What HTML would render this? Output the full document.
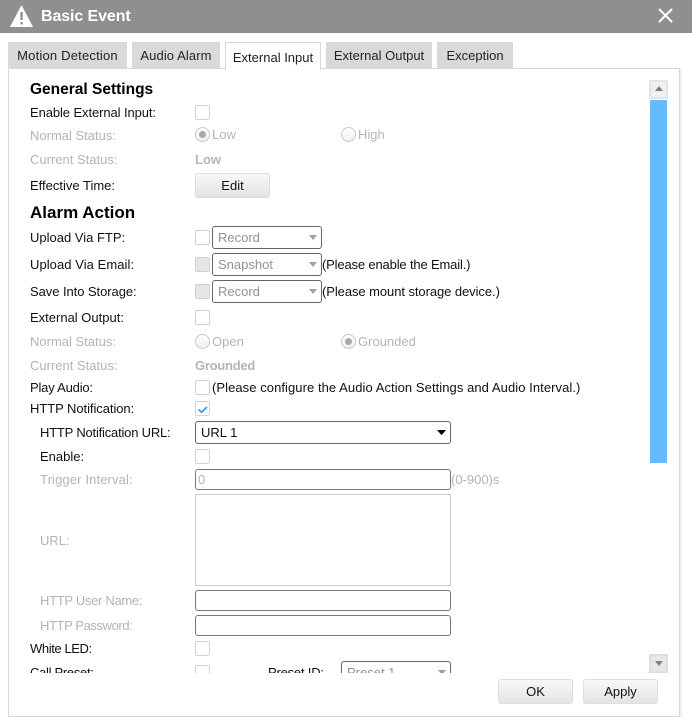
<!DOCTYPE html>
<html><head><meta charset="utf-8">
<style>
html,body{margin:0;padding:0;background:#fff}
#r{position:relative;width:692px;height:723px;overflow:hidden;background:#fff;font-family:"Liberation Sans","Noto Sans CJK SC",sans-serif;font-size:13px;color:#111}
#r div,#r span.t{position:absolute;box-sizing:border-box}
.t{white-space:nowrap;line-height:18px;height:18px}
.g{color:#b4b4b4}
.h{font-weight:bold;color:#000}
.b{font-weight:bold}
.tab{background:#d9d9d9;top:42px;height:26px;text-align:center;line-height:27px;color:#222}
.cb{width:15px;height:15px;border:1px solid #d2d2d2;border-radius:2px;background:#fff;left:195px}
.cbd{background:#e6e6e6}
.rd{width:15px;height:15px;border:1px solid #c8c8c8;border-radius:50%;background:linear-gradient(#fff,#f0f0f0)}
.rd i{position:absolute;left:3px;top:3px;width:7px;height:7px;border-radius:50%;background:#a8a8a8}
.sel{border:1px solid #666;border-radius:3px;background:#fff;height:23px;line-height:22px;padding-left:5px;color:#929292}
.sel::after{content:"";position:absolute;right:4px;top:8px;border:4.5px solid transparent;border-top:5px solid #a0a0a0;border-bottom:0}
.inp{border:1px solid #777;border-radius:3px;background:#fff;left:195px;width:256px;height:21px}
.btn{border:1px solid #ddd;border-radius:3px;background:linear-gradient(#f8f8f8,#e4e4e4);text-align:center;line-height:24px;height:25px;width:75px;color:#111}
</style></head><body>
<div id="r">
<div style="left:0;top:0;width:692px;height:33px;background:#8f8f8f"></div>
<svg style="position:absolute;left:10px;top:5px" width="24" height="23" viewBox="0 0 24 23"><path d="M11.5 0L23 22H0Z" fill="#fff"/><rect x="10.4" y="7" width="2.3" height="8" fill="#8f8f8f"/><rect x="10.4" y="17" width="2.3" height="2.4" fill="#8f8f8f"/></svg>
<span class="t" style="left:41px;top:7px;font-size:16px;font-weight:bold;color:#fff;line-height:20px;height:20px;letter-spacing:-.1px">Basic Event</span>
<svg style="position:absolute;left:657px;top:7px" width="17" height="17" viewBox="0 0 17 17"><path d="M2 2L15 15M15 2L2 15" stroke="#fff" stroke-width="2" fill="none"/></svg>

<div style="left:8px;top:68px;width:672px;height:649px;border:1px solid #d8d8d8"></div>
<div style="left:680px;top:69px;width:2px;height:648px;background:#efefef"></div>

<div class="tab" style="left:8px;width:119px;letter-spacing:.2px">Motion Detection</div>
<div class="tab" style="left:132px;width:88px;letter-spacing:.1px">Audio Alarm</div>
<div class="tab" style="left:225px;width:96px;height:28px;background:#fff;border:1px solid #d8d8d8;border-bottom:0;line-height:29px">External Input</div>
<div class="tab" style="left:326px;width:106px">External Output</div>
<div class="tab" style="left:437px;width:76px">Exception</div>

<div style="left:649px;top:80px;width:19px;height:19px;background:#f0f0f0;border:2px solid #e4e4e4"></div>
<svg style="position:absolute;left:655px;top:86px" width="8" height="5"><path d="M4 0L8 5H0Z" fill="#808080"/></svg>
<div style="left:650px;top:100px;width:17px;height:363px;background:#66bbff"></div>
<div style="left:649px;top:654px;width:19px;height:19px;background:#e8e8e8;border:2px solid #dedede"></div>
<svg style="position:absolute;left:655px;top:661px" width="8" height="5"><path d="M0 0H8L4 5Z" fill="#808080"/></svg>

<span class="t h" style="left:30px;top:81px;font-size:15.5px">General Settings</span>
<span class="t" style="left:30px;top:104px;letter-spacing:-.09px">Enable External Input:</span>
<div class="cb" style="top:105px"></div>
<span class="t g" style="left:30px;top:127px">Normal Status:</span>
<div class="rd" style="left:195px;top:127px"><i></i></div>
<span class="t g" style="left:212px;top:126px">Low</span>
<div class="rd" style="left:341px;top:127px"></div>
<span class="t g" style="left:358px;top:126px">High</span>
<span class="t g" style="left:30px;top:151px">Current Status:</span>
<span class="t g b" style="left:195px;top:151px">Low</span>
<span class="t" style="left:30px;top:177px">Effective Time:</span>
<div class="btn" style="left:195px;top:173px">Edit</div>

<span class="t h" style="left:30px;top:204px;font-size:17px">Alarm Action</span>
<span class="t" style="left:30px;top:229px">Upload Via FTP:</span>
<div class="cb" style="top:230px"></div>
<div class="sel" style="left:212px;top:226px;width:110px">Record</div>
<span class="t" style="left:30px;top:256px;letter-spacing:.06px">Upload Via Email:</span>
<div class="cb cbd" style="top:257px"></div>
<div class="sel" style="left:212px;top:253px;width:110px">Snapshot</div>
<span class="t" style="left:322px;top:256px;letter-spacing:-.16px">(Please enable the Email.)</span>
<span class="t" style="left:30px;top:283px;letter-spacing:-.06px">Save Into Storage:</span>
<div class="cb cbd" style="top:284px"></div>
<div class="sel" style="left:212px;top:280px;width:110px">Record</div>
<span class="t" style="left:322px;top:283px;letter-spacing:-.07px">(Please mount storage device.)</span>
<span class="t" style="left:30px;top:309px">External Output:</span>
<div class="cb" style="top:310px"></div>
<span class="t g" style="left:30px;top:333px">Normal Status:</span>
<div class="rd" style="left:195px;top:334px"></div>
<span class="t g" style="left:212px;top:333px">Open</span>
<div class="rd" style="left:341px;top:334px"><i></i></div>
<span class="t g" style="left:358px;top:333px">Grounded</span>
<span class="t g" style="left:30px;top:357px">Current Status:</span>
<span class="t g b" style="left:195px;top:357px;letter-spacing:-.25px">Grounded</span>
<span class="t" style="left:30px;top:379px;letter-spacing:-.2px">Play Audio:</span>
<div class="cb" style="top:380px"></div>
<span class="t" style="left:212px;top:379px;letter-spacing:.065px">(Please configure the Audio Action Settings and Audio Interval.)</span>
<span class="t" style="left:30px;top:400px;letter-spacing:-.06px">HTTP Notification:</span>
<div class="cb" style="top:401px"></div>
<svg style="position:absolute;left:197px;top:406px" width="12" height="8"><path d="M1.5 3.5L4.5 6.2L10 1" stroke="#2a9df4" stroke-width="1.7" fill="none"/></svg>
<span class="t" style="left:40px;top:424px;letter-spacing:-.2px">HTTP Notification URL:</span>
<div class="sel" style="left:195px;top:421px;width:256px;color:#111"><span style="position:absolute;left:5px;top:0">URL 1</span></div>
<svg style="position:absolute;left:437px;top:430px;z-index:2" width="9" height="5"><path d="M0 0H9L4.5 5Z" fill="#000"/></svg>
<span class="t" style="left:40px;top:448px">Enable:</span>
<div class="cb" style="top:449px"></div>
<span class="t g" style="left:40px;top:471px;letter-spacing:.13px">Trigger Interval:</span>
<div class="inp" style="top:469px;color:#b4b4b4;line-height:20px;padding-left:2px">0</div>
<span class="t g" style="left:451px;top:471px">(0-900)s</span>
<div style="left:195px;top:494px;width:256px;height:92px;border:1px solid #ccc"></div>
<span class="t g" style="left:40px;top:532px">URL:</span>
<span class="t g" style="left:40px;top:592px;letter-spacing:-.3px">HTTP User Name:</span>
<div class="inp" style="top:590px"></div>
<span class="t g" style="left:40px;top:617px;letter-spacing:-.4px">HTTP Password:</span>
<div class="inp" style="top:615px"></div>
<span class="t" style="left:30px;top:640px;letter-spacing:-.4px">White LED:</span>
<div class="cb" style="top:641px"></div>

<div style="left:20px;top:655px;width:620px;height:18px;overflow:hidden">
<span class="t" style="left:10px;top:9px;letter-spacing:-.3px">Call Preset:</span>
<div class="cb" style="top:10px;left:175px"></div>
<span class="t" style="left:248px;top:9px;letter-spacing:-.2px">Preset ID:</span>
<div class="sel" style="left:321px;top:6px;width:110px">Preset 1</div>
</div>

<div class="btn" style="left:498px;top:679px">OK</div>
<div class="btn" style="left:583px;top:679px">Apply</div>
</div>
</body></html>
